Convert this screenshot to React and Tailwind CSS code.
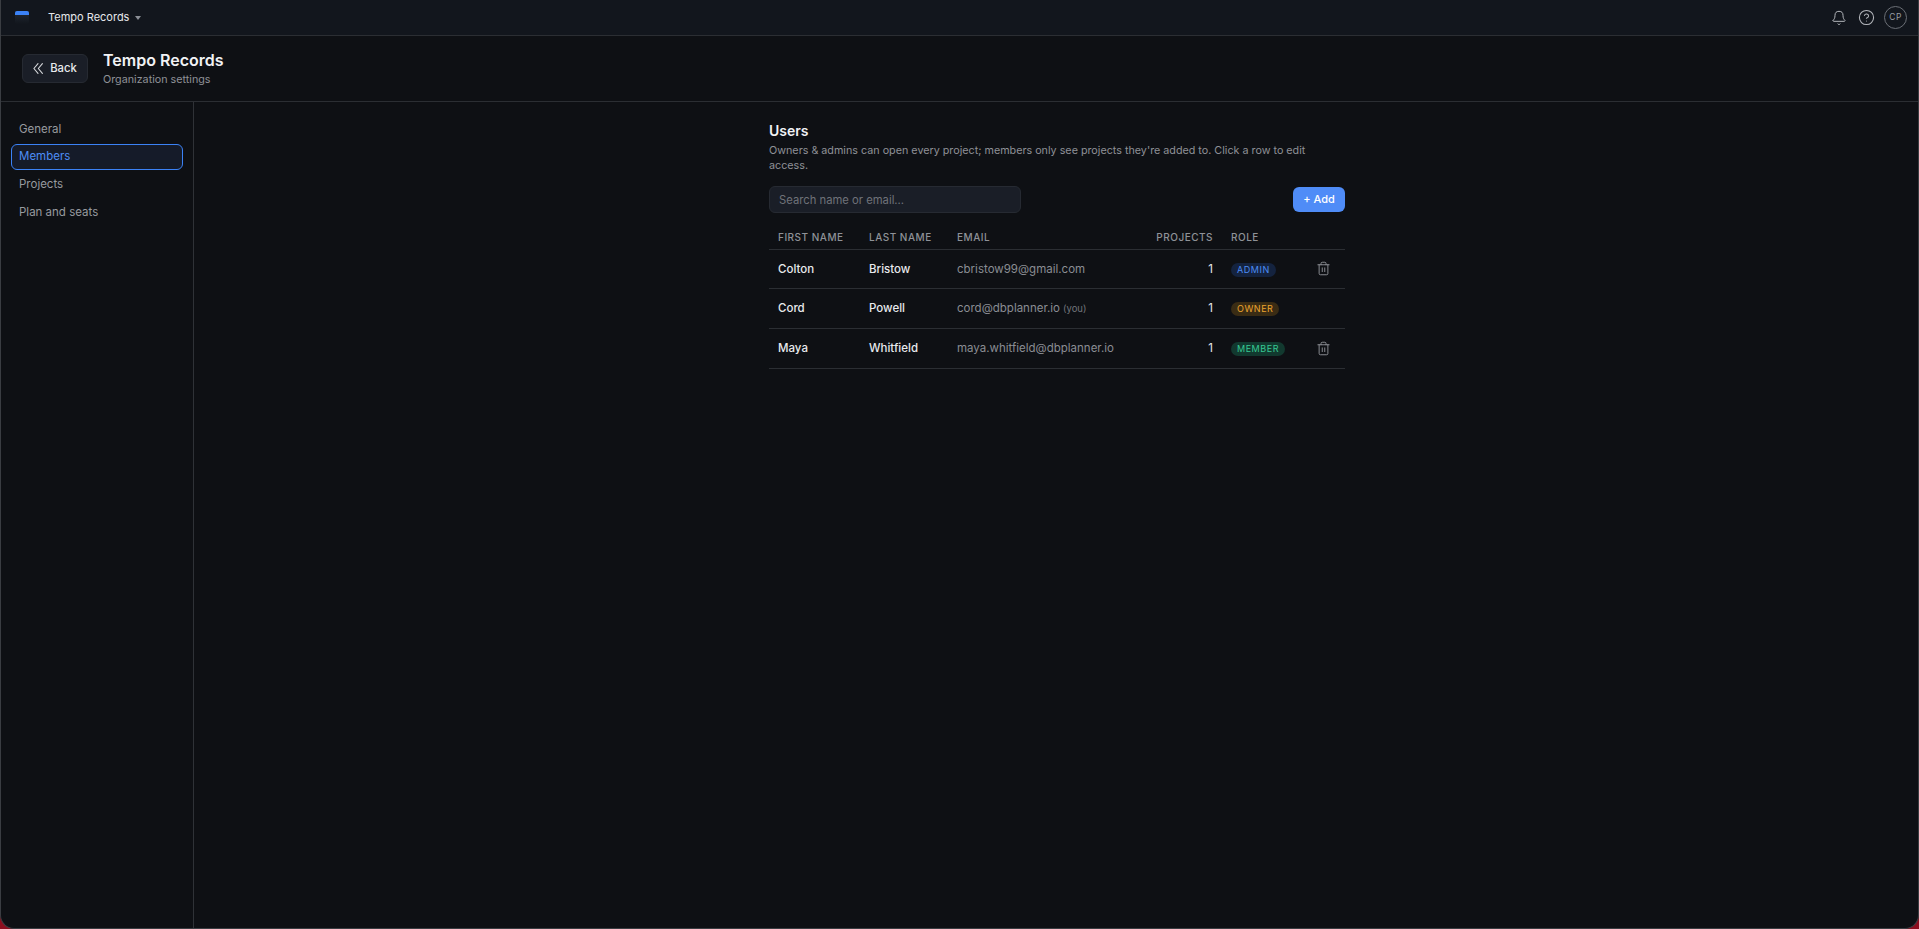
import React from "react";
import { Bell, CircleHelp, Trash2 } from "lucide-react";

const navItems = ["General", "Members", "Projects", "Plan and seats"];

const users = [
  { first: "Colton", last: "Bristow", email: "cbristow99@gmail.com", role: "ADMIN", rowH: "h-[39px]", canDelete: true },
  { first: "Cord", last: "Powell", email: "cord@dbplanner.io", you: true, role: "OWNER", rowH: "h-[40px]" },
  { first: "Maya", last: "Whitfield", email: "maya.whitfield@dbplanner.io", role: "MEMBER", rowH: "h-[40px]", canDelete: true },
];

const roleStyles = {
  ADMIN: "bg-[#14233f] text-[#4d8df5]",
  OWNER: "bg-[#3a2c14] text-[#eda52f]",
  MEMBER: "bg-[#12392f] text-[#36c993]",
};

function RoleBadge({ role }) {
  return (
    <span className={`inline-flex h-[14px] items-center rounded-full px-[6px] text-[9px] font-normal tracking-[0.06em] ${roleStyles[role]}`}>
      {role}
    </span>
  );
}

export default function App() {
  return (
    <div className="h-[929px] w-full overflow-hidden bg-[#8c0f1f] font-['Inter',sans-serif]">
      <div className="flex h-full flex-col overflow-hidden rounded-b-[14px] border-x border-b border-[#3a3d42] bg-[#0e1014]">
        <header className="flex h-[36px] shrink-0 items-center justify-between border-b border-[#2b2e33] bg-[#12161d] pl-[14px] pr-[11px]">
          <div className="flex items-center">
            <div className="h-[13px] w-[14px] overflow-hidden rounded-[2px] bg-gradient-to-b from-[#232a35] to-[#12161d]">
              <div className="h-[4px] bg-[#3b82f6]" />
            </div>
            <span className="ml-[19px] text-[11px] text-[#e6e8eb]">Tempo Records</span>
            <svg className="ml-[6px] text-[#8b8f96]" width="6" height="4" viewBox="0 0 6 4" fill="currentColor">
              <path d="M0 0h6L3 4z" />
            </svg>
          </div>
          <div className="flex items-center">
            <Bell size={16} strokeWidth={1.5} className="text-[#b4b7bc]" />
            <CircleHelp size={17} strokeWidth={1.5} className="ml-[11px] text-[#b4b7bc]" />
            <div className="ml-[9px] flex h-[23px] w-[23px] items-center justify-center rounded-full border border-[#6b6f76] text-[8.5px] font-normal tracking-[0.04em] text-[#9a9da3]">
              CP
            </div>
          </div>
        </header>

        <div className="flex h-[66px] shrink-0 items-center border-b border-[#2b2e33] pl-[21px]">
          <button className="flex h-[29px] w-[66px] items-center justify-center gap-[7px] rounded-[6px] border border-[#262a32] bg-[#1a1e27] text-[11.25px] font-medium text-[#e8eaed]">
            <svg width="10" height="11" viewBox="0 0 10 11" fill="none" stroke="#d5d7da" strokeWidth="1.1" strokeLinecap="round" strokeLinejoin="round">
              <path d="M5 .6.9 5.5 5 10.4M9.4.6 5.3 5.5l4.1 4.9" />
            </svg>
            Back
          </button>
          <div className="ml-[15px] -mt-[1px]">
            <h1 className="text-[16px] leading-[20px] font-semibold text-[#f1f2f4]">Tempo Records</h1>
            <p className="mt-[3px] text-[10.75px] leading-[14px] text-[#8e9197]">Organization settings</p>
          </div>
        </div>

        <div className="flex min-h-0 flex-1">
          <nav className="flex w-[193px] shrink-0 flex-col gap-[1px] border-r border-[#2f3237] px-[10px] pt-[14px]">
            {navItems.map((item) =>
              item === "Members" ? (
                <a key={item} className="flex h-[26px] items-center rounded-[6px] border border-[#3b82f6] bg-[#151b29] px-[7px] text-[11.5px] text-[#4d8df5]">
                  {item}
                </a>
              ) : (
                <a key={item} className="flex h-[27px] items-center px-[8px] text-[11.5px] text-[#979a9f]">
                  {item}
                </a>
              )
            )}
          </nav>

          <main className="flex flex-1 justify-center pt-[20px]">
            <section className="ml-[2px] w-[576px]">
              <h2 className="text-[14px] leading-[18px] font-semibold text-[#f1f2f4]">Users</h2>
              <p className="mt-[3px] text-[10.75px] leading-[15px] text-[#8e9197]">
                Owners &amp; admins can open every project; members only see projects they're added to. Click a row to edit access.
              </p>

              <div className="mt-[13px] flex items-center justify-between">
                <input
                  placeholder="Search name or email…"
                  className="h-[27px] w-[252px] rounded-[6px] border border-[#262a32] bg-[#1a1e27] px-[9px] text-[11.25px] text-[#e8eaed] outline-none placeholder:text-[#6f7279]"
                />
                <button className="h-[25px] w-[52px] rounded-[6px] bg-[#4f8cf7] text-[11px] font-medium text-white">+ Add</button>
              </div>

              <table className="mt-[12px] w-full table-fixed border-collapse">
                <colgroup>
                  <col className="w-[91px]" />
                  <col className="w-[88px]" />
                  <col />
                  <col className="w-[80px]" />
                  <col className="w-[87px]" />
                  <col className="w-[36px]" />
                </colgroup>
                <thead>
                  <tr className="h-[24px] border-b border-[#2b2e33] text-[10px] font-medium tracking-[0.05em] text-[#8f9298]">
                    <th className="px-[9px] pt-[1px] text-left font-medium">FIRST NAME</th>
                    <th className="px-[9px] pt-[1px] text-left font-medium">LAST NAME</th>
                    <th className="px-[9px] pt-[1px] text-left font-medium">EMAIL</th>
                    <th className="px-[9px] pt-[1px] text-right font-medium">PROJECTS</th>
                    <th className="px-[9px] pt-[1px] text-left font-medium">ROLE</th>
                    <th />
                  </tr>
                </thead>
                <tbody>
                  {users.map((u) => (
                    <tr key={u.email} className={`${u.rowH} border-b border-[#2b2e33] text-[11.5px]`}>
                      <td className="px-[9px] pt-[2px] font-[450] text-[#e8eaed]">{u.first}</td>
                      <td className="px-[9px] pt-[2px] font-[450] text-[#e8eaed]">{u.last}</td>
                      <td className="px-[9px] pt-[2px] whitespace-nowrap text-[#8a8d93]">
                        {u.email}
                        {u.you && <span className="ml-[3px] text-[9.5px] text-[#72757b]">(you)</span>}
                      </td>
                      <td className="px-[9px] pt-[2px] text-right text-[#e8eaed]">1</td>
                      <td className="px-[9px] pt-[2px]"><RoleBadge role={u.role} /></td>
                      <td className="pl-[7px]">
                        {u.canDelete && <Trash2 size={15} strokeWidth={1.5} className="text-[#8f9298]" />}
                      </td>
                    </tr>
                  ))}
                </tbody>
              </table>
            </section>
          </main>
        </div>
      </div>
    </div>
  );
}
